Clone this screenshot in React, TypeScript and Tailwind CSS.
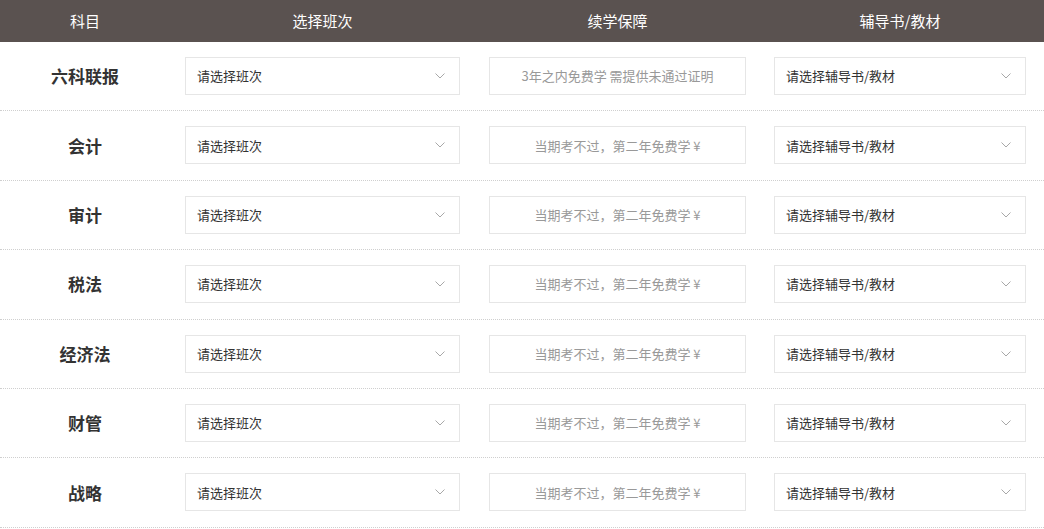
const subjects = [
  { name: '六科联报', guarantee: '3年之内免费学 需提供未通过证明' },
  { name: '会计', guarantee: '当期考不过，第二年免费学 ¥' },
  { name: '审计', guarantee: '当期考不过，第二年免费学 ¥' },
  { name: '税法', guarantee: '当期考不过，第二年免费学 ¥' },
  { name: '经济法', guarantee: '当期考不过，第二年免费学 ¥' },
  { name: '财管', guarantee: '当期考不过，第二年免费学 ¥' },
  { name: '战略', guarantee: '当期考不过，第二年免费学 ¥' },
];

function Chevron() {
  return (
    <svg className="w-[10px] h-[6px]" viewBox="0 0 10 6" fill="none">
      <polyline
        points="0.5,0.5 5,5 9.5,0.5"
        stroke="#a8a8a8"
        strokeWidth="1"
      />
    </svg>
  );
}

function SelectBox({ text }: { text: string }) {
  return (
    <div className="flex items-center justify-between h-[38px] border border-[#e6e6e6] bg-white pl-[11px] pr-[14px]">
      <span className="text-[13px] text-[#333]">{text}</span>
      <Chevron />
    </div>
  );
}

export default function App() {
  return (
    <div
      className="w-[1044px] bg-white"
      style={{ fontFamily: '"Microsoft YaHei", "Noto Sans CJK SC", sans-serif' }}
    >
      <div className="grid grid-cols-[170px_305px_285px_284px] h-[42px] bg-[#5a5250] text-white text-[15px] items-center text-center">
        <div>科目</div>
        <div>选择班次</div>
        <div>续学保障</div>
        <div className="pr-[4px]">辅导书/教材</div>
      </div>
      {subjects.map((s) => (
        <div
          key={s.name}
          className="grid grid-cols-[170px_305px_285px_284px] h-[69.4px] border-b border-dotted border-[#cfcfcf] pt-[15px]"
        >
          <div className="flex items-center justify-center h-[38px] text-[17px] font-bold text-[#333]">
            {s.name}
          </div>
          <div className="px-[15px]">
            <SelectBox text="请选择班次" />
          </div>
          <div className="px-[14px]">
            <div className="flex items-center justify-center h-[38px] border border-[#e6e6e6] text-[13px] text-[#999]">
              {s.guarantee}
            </div>
          </div>
          <div className="pl-[14px] pr-[18px]">
            <SelectBox text="请选择辅导书/教材" />
          </div>
        </div>
      ))}
    </div>
  );
}
